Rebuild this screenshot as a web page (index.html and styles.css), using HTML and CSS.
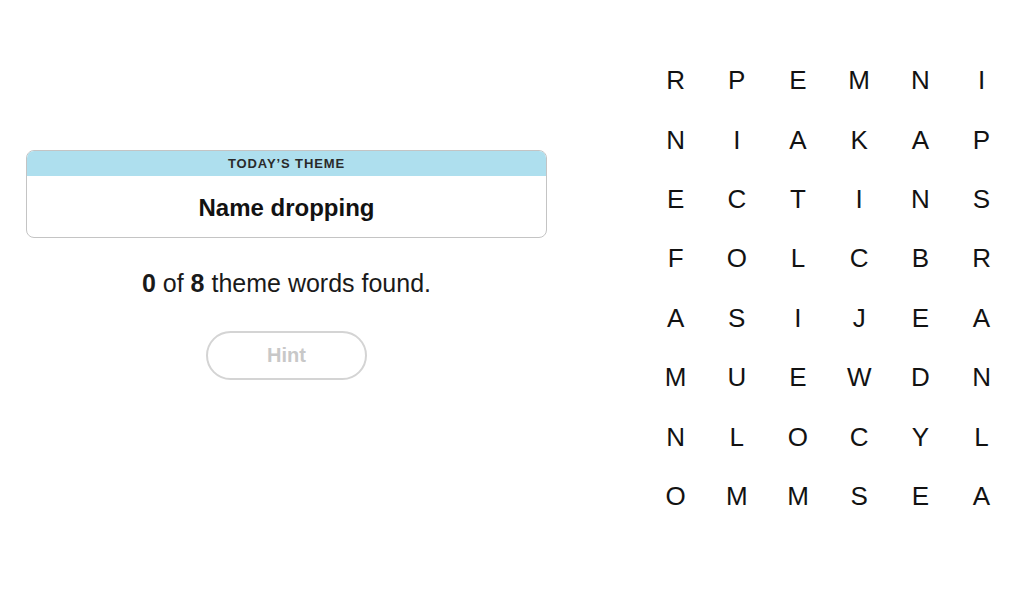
FILE: index.html
```html
<!DOCTYPE html>
<html>
<head>
	<title>Strands</title>
	<link rel="stylesheet" href="styles.css">
</head>
<body>
	<div class="game">
		<div class="side-panel">
			<div class="theme-card">
				<div class="theme-label">TODAY&rsquo;S THEME</div>
				<div class="theme-name">Name dropping</div>
			</div>
			<p class="progress"><b>0</b> of <b>8</b> theme words found.</p>
			<button class="hint-button" disabled>Hint</button>
		</div>
		<div class="board">
			<span>R</span><span>P</span><span>E</span><span>M</span><span>N</span><span>I</span>
			<span>N</span><span>I</span><span>A</span><span>K</span><span>A</span><span>P</span>
			<span>E</span><span>C</span><span>T</span><span>I</span><span>N</span><span>S</span>
			<span>F</span><span>O</span><span>L</span><span>C</span><span>B</span><span>R</span>
			<span>A</span><span>S</span><span>I</span><span>J</span><span>E</span><span>A</span>
			<span>M</span><span>U</span><span>E</span><span>W</span><span>D</span><span>N</span>
			<span>N</span><span>L</span><span>O</span><span>C</span><span>Y</span><span>L</span>
			<span>O</span><span>M</span><span>M</span><span>S</span><span>E</span><span>A</span>
		</div>
	</div>
</body>
</html>
```
FILE: styles.css
```css
body {
	margin: 0;
	background-color: #fff;
	color: #121212;
	font-family: "Liberation Sans", Arial, sans-serif;
}
.game {
	display: flex;
	align-items: flex-start;
	height: 595px;
}
.side-panel {
	width: 521px;
	margin: 150px 0 0 26px;
	display: flex;
	flex-direction: column;
	align-items: center;
}
.theme-card {
	width: 100%;
	box-sizing: border-box;
	border: 1px solid #c4c4c4;
	border-radius: 8px;
	overflow: hidden;
	text-align: center;
}
.theme-label {
	height: 25px;
	line-height: 25px;
	background-color: #aedfee;
	font-size: 13px;
	font-weight: bold;
	letter-spacing: 0.9px;
	color: #2a2a2a;
}
.theme-name {
	height: 61px;
	padding-top: 2px;
	box-sizing: border-box;
	line-height: 59px;
	font-size: 24px;
	font-weight: bold;
}
.progress {
	margin: 30px 0 0;
	font-size: 25px;
	line-height: 30px;
	color: #1a1a1a;
}
.hint-button {
	margin-top: 33px;
	width: 161px;
	height: 49px;
	border: 2px solid #d4d4d4;
	border-radius: 25px;
	background-color: #fff;
	color: #c8c8c8;
	font-family: "Liberation Sans", Arial, sans-serif;
	font-size: 20px;
	font-weight: bold;
}
.board {
	margin: 51px 0 0 98px;
	display: grid;
	grid-template-columns: repeat(6, 61.2px);
	grid-template-rows: repeat(8, 59.4px);
}
.board span {
	display: flex;
	align-items: center;
	justify-content: center;
	font-size: 26px;
	color: #121212;
}
```
